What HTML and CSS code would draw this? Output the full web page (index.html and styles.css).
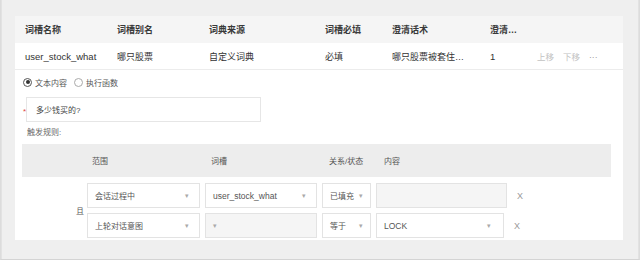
FILE: index.html
```html
<!DOCTYPE html>
<html lang="zh-CN">
<head>
  <meta charset="UTF-8" />
  <title>词槽配置</title>
  <link rel="stylesheet" href="styles.css">
</head>
<body>
  <div class="frame">
    <div class="card">
      <div class="slot-table">
        <div class="slot-row slot-head">
          <span>词槽名称</span>
          <span>词槽别名</span>
          <span>词典来源</span>
          <span>词槽必填</span>
          <span>澄清话术</span>
          <span>澄清…</span>
          <span></span>
        </div>
        <div class="slot-row">
          <span class="latin">user_stock_what</span>
          <span>哪只股票</span>
          <span>自定义词典</span>
          <span>必填</span>
          <span>哪只股票被套住…</span>
          <span class="latin">1</span>
          <span class="ops"><em>上移</em><em>下移</em><em class="more">···</em></span>
        </div>
      </div>

      <div class="radios">
        <label class="radio"><i class="dot checked"></i>文本内容</label>
        <label class="radio"><i class="dot"></i>执行函数</label>
      </div>

      <div class="answer">
        <span class="req">*</span>
        <div class="text-input">多少钱买的?</div>
      </div>

      <div class="rule-label">触发规则:</div>

      <div class="rules">
        <div class="rules-head">
          <span></span>
          <span>范围</span>
          <span>词槽</span>
          <span>关系/状态</span>
          <span>内容</span>
        </div>
        <div class="rules-body">
          <div class="joiner">且</div>
          <div class="rule-lines">
            <div class="rule">
              <div class="sel w-scope">会话过程中<b>▾</b></div>
              <div class="sel w-slot latin">user_stock_what<b>▾</b></div>
              <div class="sel w-rel">已填充<b>▾</b></div>
              <div class="field w-val disabled"></div>
              <span class="remove">X</span>
            </div>
            <div class="rule">
              <div class="sel w-scope">上轮对话意图<b>▾</b></div>
              <div class="sel w-slot disabled"><b>▾</b></div>
              <div class="sel w-rel">等于<b>▾</b></div>
              <div class="sel w-val2 latin">LOCK<b>▾</b></div>
              <span class="remove">X</span>
            </div>
          </div>
        </div>
      </div>
    </div>
  </div>
</body>
</html>
```

FILE: styles.css
```css
body {
  margin: 0;
  background: #f0f0f0;
  font-family: "Liberation Sans", "Noto Sans CJK SC", sans-serif;
  color: #333;
}

.frame {
  width: 640px;
  height: 260px;
  box-sizing: border-box;
  border-left: 1px solid #dcdcdc;
  border-right: 1px solid #dcdcdc;
  border-bottom: 1px solid #d4d4d4;
  box-shadow: inset 5px 0 0 -4px #e2e2e2, inset -5px 0 0 -4px #e2e2e2;
  padding: 16px 16px 19px 14px;
  background: #efefef;
}

.card {
  background: #fff;
  height: 224px;
  box-sizing: border-box;
  padding-bottom: 2px;
}

/* top table */
.slot-row {
  display: grid;
  grid-template-columns: 92px 92px 116px 67px 98px 47px 1fr;
  height: 27px;
  align-items: center;
  padding-left: 10px;
  font-size: 9px;
  border-bottom: 1px solid #ececec;
  box-sizing: border-box;
}

.slot-head {
  background: #f5f5f5;
  font-weight: bold;
  color: #3a3a3a;
  border-bottom: none;
}

.slot-row span {
  white-space: nowrap;
}

.latin {
  font-size: 9.5px;
}

.ops em {
  font-style: normal;
  color: #c2c2c2;
  margin-right: 9px;
  font-size: 8.5px;
}

.ops .more {
  color: #999;
}

/* radios */
.radios {
  display: flex;
  gap: 7px;
  margin: 4px 0 0 8px;
  height: 16px;
  align-items: center;
  font-size: 8px;
  color: #555;
}

.radio {
  display: flex;
  align-items: center;
  gap: 3px;
}

.dot {
  width: 9px;
  height: 9px;
  border: 1px solid #aaa;
  border-radius: 50%;
  box-sizing: border-box;
  position: relative;
}

.dot.checked {
  border-color: #555;
}

.dot.checked::after {
  content: "";
  position: absolute;
  left: 1.5px;
  top: 1.5px;
  width: 4px;
  height: 4px;
  border-radius: 50%;
  background: #333;
}

/* answer input */
.answer {
  display: flex;
  align-items: center;
  margin: 7px 0 0 8px;
}

.req {
  color: #e04444;
  font-size: 8px;
  width: 3px;
  margin-top: 4px;
}

.text-input {
  width: 235px;
  height: 25px;
  box-sizing: border-box;
  border: 1px solid #e6e6e6;
  padding-left: 9px;
  display: flex;
  align-items: center;
  font-size: 8px;
  color: #444;
}

.rule-label {
  margin: 5px 0 0 12px;
  font-size: 8px;
  color: #666;
  height: 12px;
  line-height: 12px;
}

/* rules table */
.rules {
  margin: 5px 12px 0 7px;
  font-size: 8px;
  color: #555;
}

.rules-head {
  display: grid;
  grid-template-columns: 70px 119px 118px 55px 1fr;
  height: 33px;
  align-items: center;
  background: #ededed;
}

.rules-body {
  display: flex;
  align-items: center;
  margin-top: 6px;
}

.joiner {
  width: 65px;
  box-sizing: border-box;
  text-align: right;
  padding-right: 3px;
}

.rule-lines {
  display: flex;
  flex-direction: column;
  gap: 5px;
}

.rule {
  display: flex;
  align-items: center;
  gap: 5px;
}

.sel,
.field {
  height: 25px;
  box-sizing: border-box;
  border: 1px solid #e3e3e3;
  display: flex;
  align-items: center;
  justify-content: space-between;
  padding: 0 10px 0 7px;
  background: #fff;
  white-space: nowrap;
}

.sel b {
  font-weight: normal;
  color: #aaa;
  font-size: 7px;
}

.sel.latin {
  font-size: 8.5px;
}

.disabled {
  background: #f5f5f5;
}

.w-scope { width: 113px; }
.w-slot { width: 112px; }
.w-rel { width: 49px; padding-right: 7px; }
.w-val { width: 131px; }
.w-val2 { width: 128px; padding-right: 12px; }

.remove {
  color: #999;
  font-size: 9px;
  margin-left: 5px;
}
```
